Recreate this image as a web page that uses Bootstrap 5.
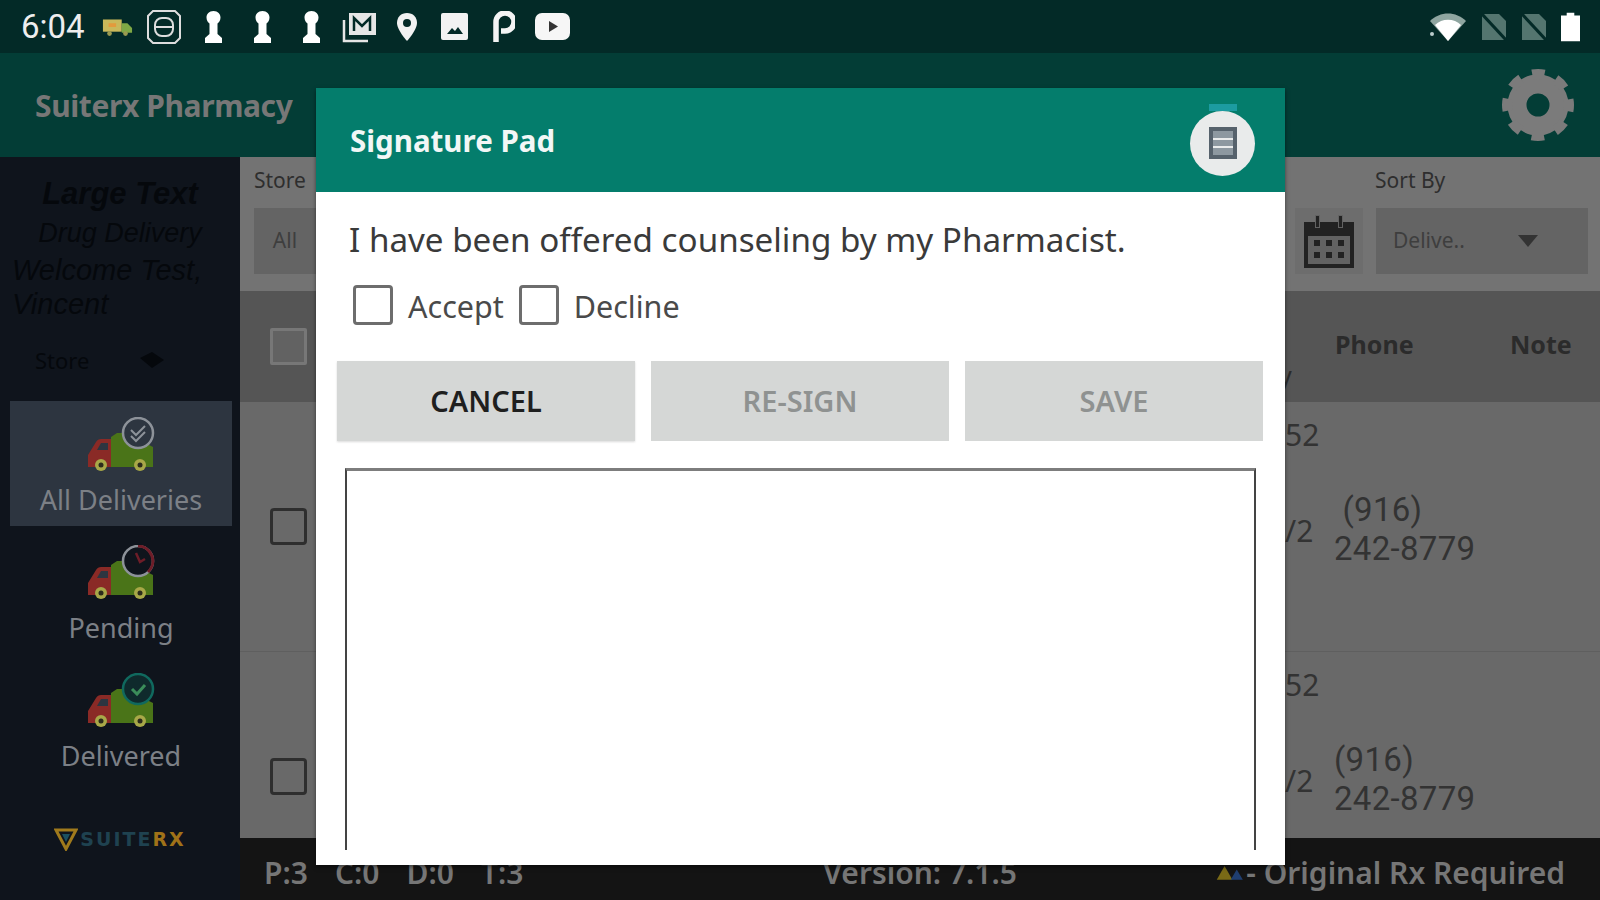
<!DOCTYPE html>
<html lang="en">
  <head>
    <meta charset="UTF-8" />
    <title>Signature Pad</title>
    <link rel="stylesheet" href="https://cdn.jsdelivr.net/npm/bootstrap@5.3.0/dist/css/bootstrap.min.css" />
    <style>
      html, body { width: 1600px; height: 900px; overflow: hidden; }
      body { font-family: "Noto Sans", "Open Sans", sans-serif; background: #141414; }
      .screen { width: 1600px; height: 900px; position: relative; overflow: hidden; }

      /* status + app bar */
      .status-bar { height: 53px; background: #032a27; color: #eee; padding: 0 20px 0 21px; }
      .status-time { font-family: Roboto, sans-serif; font-size: 33px; width: 81px; }
      .status-icons { gap: 13px; }
      .status-right { gap: 14px; }
      .st-key { margin: 0 7.5px; }
      .st-mid { margin: 0 5px; }
      .st-p { margin: 0 7px; }
      .app-bar { height: 104px; background: #033d36; padding: 0 26px 0 35px; }
      .app-name { color: #777; font-size: 30px; font-weight: 700; letter-spacing: -0.4px; }

      /* sidebar */
      .side { width: 240px; height: 743px; background: #0f141c; }
      .side-head { height: 244px; color: #05080c; font-family: "Liberation Sans", sans-serif; font-style: italic; font-size: 29px; line-height: 34px; padding: 18px 12px 0; }
      .side-large { font-size: 31px; font-weight: 700; line-height: 38px; }
      .side-drug { font-size: 27px; line-height: 40px; }
      .side-store { font-family: "Noto Sans", sans-serif; font-style: normal; font-size: 22px; padding: 24px 64px 0 23px; line-height: 30px; }
      .side-tile { height: 125px; margin: 0 8px 3px 10px; color: #7c8086; font-size: 27px; padding-top: 16px; line-height: 36px; }
      .side-tile.active { background: #2d3540; }
      .side-tile svg { display: block; margin: 0 auto 11px; }
      .side-logo { padding-top: 40px; gap: 2px; }
      .logo-text { font-family: "DejaVu Sans", sans-serif; font-size: 19px; font-weight: 700; letter-spacing: 2px; color: #1f4250; }
      .logo-text b { color: #a07218; }

      /* filter bar, table */
      .content { width: 1360px; height: 743px; }
      .filter-bar { height: 134px; background: #737373; color: #2e2e2e; font-size: 21px; }
      .filter-label { position: absolute; top: 165px; }
      .filter-box { position: absolute; top: 208px; height: 66px; background: #646464; color: #3e3e3e; }
      .filter-box.faint { background: #6d6d6d; }
      .grid-row { display: grid; grid-template-columns: 80px 965px 50px 175px 90px; }
      .table-head { height: 111px; background: #555; color: #2b2b2b; font-size: 25px; font-weight: 700; }
      .head-cell { padding-bottom: 4px; }
      .head-tail { margin-left: -6px; font-weight: 400; padding-bottom: 8px; }
      .rows { height: 436px; overflow: hidden; background: #696969; }
      .data-row { height: 250px; border-bottom: 1px solid #5f5f5f; color: #333; font-size: 30px; line-height: 41px; }
      .tick { width: 37px; height: 37px; border: 3px solid #2e2e2e; border-radius: 4px; margin-left: 30px; }
      .tick.head-tick { border-color: #777; background: #626262; border-radius: 2px; }
      .date-cell { padding-top: 12px; }
      .date-cell span:last-child { margin-top: 55px; }
      .phone-cell { font-family: Roboto, sans-serif; font-size: 33px; letter-spacing: .3px; line-height: 39px; padding-top: 4px; margin-left: -1px; }
      .foot-bar { height: 62px; background: #141414; color: #767676; font-size: 30px; font-weight: 600; padding: 6px 35px 0 24px; }
      .foot-bar .counts { width: 361px; gap: 27px; }
      .foot-rx { width: 350px; }

      /* dialog */
      .sign-dialog { position: absolute; left: 316px; top: 88px; width: 969px; height: 777px; background: #fff; box-shadow: 0 2px 4px rgba(0,0,0,.5); }
      .sign-head { height: 104px; background: #047d6c; padding: 0 30px 0 34px; color: #f2f7f6; font-size: 29.5px; font-weight: 700; position: relative; }
      .sign-title { margin-top: 2px; }
      .sign-btn-round { width: 65px; height: 65px; border-radius: 50%; background: #e9ebeb; position: relative; margin-top: 6px; }
      .sign-btn-round::before { content: ""; position: absolute; left: 19px; top: -7px; width: 28px; height: 7px; background: #1c9ba0; }
      .sign-text { font-size: 33.2px; color: #3a3a3a; padding: 25px 0 0 33px; line-height: 46px; }
      .consent { padding: 22px 0 0 37px; gap: 15px; color: #4a4a4a; font-size: 30.500px; line-height: 42px; height: 98px; }
      .box-check { width: 40px; height: 40px; border: 3px solid #6d6d6d; border-radius: 4px; flex: none; }
      .sign-actions { padding: 0 22px 0 21px; gap: 16px; }
      .sign-actions .btn { flex: 1; height: 80px; border: 0; border-radius: 0; background: #d5d7d6; color: #1f1f1f; font-size: 29px; font-weight: 600; padding: 0; opacity: 1; box-shadow: 0 1px 2px rgba(0,0,0,.15); }
      .sign-actions .btn:disabled { color: #8f9291; box-shadow: none; }
      .pad { margin: 27px 29px 0; height: 382px; border: solid #444; border-width: 3px 2px 0; border-top-color: #7d7d7d; }
    </style>
  </head>
  <body>
    <svg width="0" height="0" class="d-block" aria-hidden="true">
      <symbol id="truck" viewBox="0 0 68 40">
        <path d="M2 36V24l8-13c1-2 3-3 5-3h10v28z" fill="#8a2a26" />
        <path d="M11 19l4-7h7v7z" fill="#2d3540" />
        <path d="M25 36V6l6-4h8l28 14v20z" fill="#4a7418" />
        <circle cx="15" cy="34" r="6" fill="#a8a848" /><circle cx="15" cy="34" r="2.500" fill="#2b2b1c" />
        <circle cx="54" cy="34" r="6" fill="#a8a848" /><circle cx="54" cy="34" r="2.500" fill="#2b2b1c" />
      </symbol>
      <symbol id="keyhole" viewBox="0 0 21 34">
        <path d="M10.500 1c4.500 0 7 3 7 6.500 0 3-1.500 5-3 6v10.500l4.500 4v5H2v-5l4.500-4V13.500c-1.500-1-3-3-3-6C3.500 4 6 1 10.500 1z" fill="#fff" />
      </symbol>
    </svg>

    <div class="screen">
      <div class="status-bar d-flex align-items-center">
        <div class="status-time">6:04</div>
        <div class="status-icons d-flex align-items-center flex-grow-1">
          <svg width="31" height="22" viewBox="0 0 33 22"><rect x="1" y="3" width="20" height="13" fill="#c9b85a" /><rect x="7" y="7" width="8" height="4" fill="#e39a3c" /><path d="M21 7h6l5 5v5H21z" fill="#7fa845" /><circle cx="8" cy="18" r="2.500" fill="#9a9a50" /><circle cx="25" cy="18" r="2.500" fill="#9a9a50" /></svg>
          <svg width="36" height="36" viewBox="0 0 36 36" fill="none" stroke="#ddd" stroke-width="2"><path d="M7 2h22l5 5v22l-5 5H7l-5-5V7z" /><rect x="9" y="9" width="18" height="18" rx="7" /><path d="M9 18h18" /></svg>
          <svg width="21" height="34" class="st-key"><use href="#keyhole" /></svg>
          <svg width="21" height="34" class="st-key"><use href="#keyhole" /></svg>
          <svg width="21" height="34" class="st-key"><use href="#keyhole" /></svg>
          <svg width="36" height="32" viewBox="0 0 36 32" fill="none" stroke="#e6e6e6" stroke-width="2.500"><path d="M2 9v21h24" /><rect x="7" y="2" width="27" height="22" fill="#e6e6e6" stroke="none" /><path d="M12 20V7l8 8 8-8v13" stroke="#032a27" /></svg>
          <svg width="22" height="30" viewBox="0 0 22 30" class="st-mid"><path d="M11 1c6 0 10 4 10 10 0 7-10 18-10 18S1 18 1 11C1 5 5 1 11 1z" fill="#f2f2f2" /><circle cx="11" cy="11" r="4" fill="#032a27" /></svg>
          <svg width="27" height="27" viewBox="0 0 27 27" class="st-mid"><rect width="27" height="27" rx="2" fill="#f2f2f2" /><path d="M6 21l5-6 3 3 3-4 5 7z" fill="#032a27" /></svg>
          <svg width="22" height="32" viewBox="0 0 22 32" class="st-p"><path d="M3 31V11a9 9 0 1 1 9 9H8" fill="none" stroke="#f4f4f4" stroke-width="5.500" /></svg>
          <svg width="35" height="27" viewBox="0 0 35 27"><rect width="35" height="27" rx="7" fill="#f6f6f6" /><path d="M14 8l9 5.500-9 5.500z" fill="#333" /></svg>
        </div>
        <div class="status-right d-flex align-items-center">
          <svg width="38" height="30" viewBox="0 0 38 30"><path d="M19 29L1 9c10-10 26-10 36 0z" fill="#8fa5a0" /><path d="M19 29L6 13c7-7 19-7 26 0z" fill="#fff" /><circle cx="3" cy="22" r="2" fill="#bcc" /></svg>
          <svg width="26" height="28" viewBox="0 0 26 28"><path d="M1 1h17l7 7v19H1z" fill="#54756f" /><path d="M1 1l24 26" stroke="#032a27" stroke-width="3" /></svg>
          <svg width="26" height="28" viewBox="0 0 26 28"><path d="M1 1h17l7 7v19H1z" fill="#54756f" /><path d="M1 1l24 26" stroke="#032a27" stroke-width="3" /></svg>
          <svg width="19" height="30" viewBox="0 0 20 30"><path d="M6 0h8v3h6v27H0V3h6z" fill="#fff" /></svg>
        </div>
      </div>

      <div class="app-bar d-flex align-items-center justify-content-between">
        <div class="app-name">Suiterx Pharmacy</div>
        <svg width="72" height="72" viewBox="0 0 72 72" fill="none" stroke="#7b7b7b"><circle cx="36" cy="36" r="21" stroke-width="19" /><circle cx="36" cy="36" r="31" stroke-width="10" stroke-dasharray="12.200 12.150" stroke-dashoffset="6" /></svg>
      </div>

      <div class="d-flex">
        <aside class="side text-center">
          <div class="side-head text-start">
            <div class="text-center side-large">Large Text</div>
            <div class="text-center side-drug">Drug Delivery</div>
            <div class="text-nowrap">Welcome Test,</div>
            <div>Vincent</div>
            <div class="side-store d-flex justify-content-between align-items-center">
              <span>Store</span>
              <svg width="24" height="16" viewBox="0 0 24 16"><path d="M0 6l12-6 12 8-12 8z" fill="#05080c" /></svg>
            </div>
          </div>
          <div class="side-tile active">
            <svg width="70" height="54" viewBox="0 0 70 54"><use href="#truck" x="0" y="14" width="68" height="40" /><circle cx="52" cy="16" r="15" fill="#2d3540" stroke="#8d9299" stroke-width="2.500" /><path d="M45 13l5 5 9-9M45 19l5 5 9-9" fill="none" stroke="#8d9299" stroke-width="2" /></svg>
            All Deliveries
          </div>
          <div class="side-tile">
            <svg width="70" height="54" viewBox="0 0 70 54"><use href="#truck" x="0" y="14" width="68" height="40" /><circle cx="52" cy="16" r="15" fill="#0f141c" stroke="#8d9299" stroke-width="2.500" /><path d="M52 1a15 15 0 0 1 10 26" fill="none" stroke="#6e1d28" stroke-width="3" /><path d="M50 8l4 9 5-3" fill="none" stroke="#6e1d28" stroke-width="2.500" /></svg>
            Pending
          </div>
          <div class="side-tile">
            <svg width="70" height="54" viewBox="0 0 70 54"><use href="#truck" x="0" y="14" width="68" height="40" /><circle cx="52" cy="16" r="15" fill="#0f2a2c" stroke="#10695e" stroke-width="2.500" /><path d="M46 16l5 5 8-9" fill="none" stroke="#3b8d5a" stroke-width="3" /></svg>
            Delivered
          </div>
          <div class="side-logo d-flex align-items-center justify-content-center">
            <svg width="24" height="24" viewBox="0 0 24 24" fill="none"><path d="M2 3h20l-10 19z" stroke="#a07a1c" stroke-width="3" /><path d="M8 7h8l-4 8z" fill="#1b5060" /></svg>
            <span class="logo-text">SUITE<b>RX</b></span>
          </div>
        </aside>

        <main class="content">
          <div class="filter-bar">
            <span class="filter-label" style="left:254px">Store</span>
            <div class="filter-box d-flex align-items-center justify-content-center" style="left:254px;width:62px">All</div>
            <div class="filter-box faint d-flex align-items-center justify-content-center" style="left:1295px;width:68px">
              <svg width="52" height="54" viewBox="0 0 52 54"><path d="M1 8h50v46H1z" fill="#222" /><rect x="5" y="22" width="42" height="28" fill="#626262" /><rect x="12" y="1" width="5" height="13" fill="#626262" /><rect x="35" y="1" width="5" height="13" fill="#626262" /><rect x="13" y="2" width="3" height="11" fill="#222" /><rect x="36" y="2" width="3" height="11" fill="#222" /><g fill="#222"><rect x="11" y="26" width="6" height="6" /><rect x="23" y="26" width="6" height="6" /><rect x="35" y="26" width="6" height="6" /><rect x="11" y="38" width="6" height="6" /><rect x="23" y="38" width="6" height="6" /><rect x="35" y="38" width="6" height="6" /></g></svg>
            </div>
            <span class="filter-label" style="left:1375px">Sort By</span>
            <div class="filter-box d-flex align-items-center justify-content-between" style="left:1376px;width:212px;padding:0 50px 0 17px">
              <span>Delive..</span>
              <svg width="20" height="12" viewBox="0 0 20 12"><path d="M0 0h20L10 12z" fill="#333" /></svg>
            </div>
          </div>

          <div class="table-head grid-row align-items-center">
            <div class="tick head-tick"></div>
            <div></div>
            <div class="align-self-end head-tail">y</div>
            <div class="head-cell">Phone</div>
            <div class="head-cell">Note</div>
          </div>

          <div class="rows">
            <div class="data-row grid-row align-items-center">
              <div class="tick"></div>
              <div></div>
              <div class="date-cell align-self-start d-flex flex-column"><span>52</span><span>/2</span></div>
              <div class="phone-cell"><div>&nbsp;(916)</div><div>242-8779</div></div>
              <div></div>
            </div>
            <div class="data-row grid-row align-items-center">
              <div class="tick"></div>
              <div></div>
              <div class="date-cell align-self-start d-flex flex-column"><span>52</span><span>/2</span></div>
              <div class="phone-cell"><div>(916)</div><div>242-8779</div></div>
              <div></div>
            </div>
          </div>

          <div class="foot-bar d-flex align-items-center">
            <div class="counts d-flex"><span>P:3</span><span>C:0</span><span>D:0</span><span>T:3</span></div>
            <div class="flex-grow-1 text-center">Version: 7.1.5</div>
            <div class="foot-rx d-flex align-items-center justify-content-between text-nowrap">
              <svg width="36" height="20" viewBox="0 0 36 20"><path d="M2 19L11 3l9 16z" fill="#7a6a16" /><path d="M18 19l7-12 7 12z" fill="#1f3e70" /></svg>
              <span>- Original Rx Required</span>
            </div>
          </div>
        </main>
      </div>

      <div class="sign-dialog">
        <div class="sign-head d-flex align-items-center justify-content-between">
          <span class="sign-title">Signature Pad</span>
          <div class="sign-btn-round d-flex align-items-center justify-content-center">
            <svg width="28" height="32" viewBox="0 0 28 32"><rect width="28" height="32" fill="#56626c" /><rect x="4" y="4" width="20" height="24" fill="#8d98a0" /><path d="M4 12h20M4 20h20" stroke="#e9ebeb" stroke-width="2" /></svg>
          </div>
        </div>
        <div class="sign-text">I have been offered counseling by my Pharmacist.</div>
        <div class="consent d-flex">
          <div class="box-check"></div><span>Accept</span>
          <div class="box-check"></div><span>Decline</span>
        </div>
        <div class="sign-actions d-flex">
          <button class="btn" type="button">CANCEL</button>
          <button class="btn" type="button" disabled>RE-SIGN</button>
          <button class="btn" type="button" disabled>SAVE</button>
        </div>
        <div class="pad"></div>
      </div>
    </div>

    <script src="https://cdn.jsdelivr.net/npm/bootstrap@5.3.0/dist/js/bootstrap.bundle.min.js"></script>
  </body>
</html>
